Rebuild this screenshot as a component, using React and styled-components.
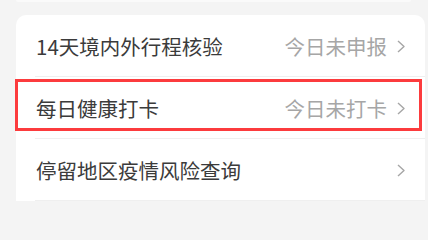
import styled, { createGlobalStyle } from 'styled-components';

const GlobalStyle = createGlobalStyle`
  body {
    margin: 0;
    background: #f4f4f4;
    font-family: "Noto Sans CJK SC", "Noto Sans", sans-serif;
  }
`;

const Page = styled.div`
  width: 428px;
  height: 203px;
  overflow: hidden;
`;

const PrevCard = styled.div`
  height: 2px;
  margin: 0 17px 0 16px;
  background: #fafafa;
  border-radius: 0 0 8px 8px;
`;

const Card = styled.div`
  margin: 13px 3px 0 16px;
  background: #ffffff;
  border-radius: 10px 10px 0 0;
`;

const Row = styled.div`
  position: relative;
  height: 62px;
  display: flex;
  align-items: center;
  justify-content: space-between;
  padding: 0 20px;

  &::before {
    content: '';
    position: absolute;
    left: 19px;
    right: 0;
    bottom: 0;
    border-bottom: 1px solid #efefef;
  }

  ${({ $highlight }) =>
    $highlight &&
    `
    &::after {
      content: '';
      position: absolute;
      top: 2px;
      bottom: 8px;
      left: -1px;
      right: 3px;
      border: 3px solid #fc3b3d;
      pointer-events: none;
    }
  `}
`;

const Title = styled.span`
  font-size: 20.5px;
  color: #3b3b3b;
`;

const Status = styled.span`
  display: flex;
  align-items: center;
  gap: 10px;
  font-size: 20.5px;
  color: #a6a6a6;
`;

const Chevron = () => (
  <svg width="8" height="13" viewBox="0 0 8 13" fill="none">
    <polyline points="1,1 7,6.5 1,12" stroke="#a6a6a6" strokeWidth="1.4" strokeLinejoin="round" />
  </svg>
);

const items = [
  { title: '14天境内外行程核验', status: '今日未申报' },
  { title: '每日健康打卡', status: '今日未打卡', highlight: true },
  { title: '停留地区疫情风险查询', status: '' },
];

const App = () => (
  <Page>
    <GlobalStyle />
    <PrevCard />
    <Card>
      {items.map((item) => (
        <Row key={item.title} $highlight={item.highlight}>
          <Title>{item.title}</Title>
          <Status>
            {item.status}
            <Chevron />
          </Status>
        </Row>
      ))}
    </Card>
  </Page>
);

export default App;
